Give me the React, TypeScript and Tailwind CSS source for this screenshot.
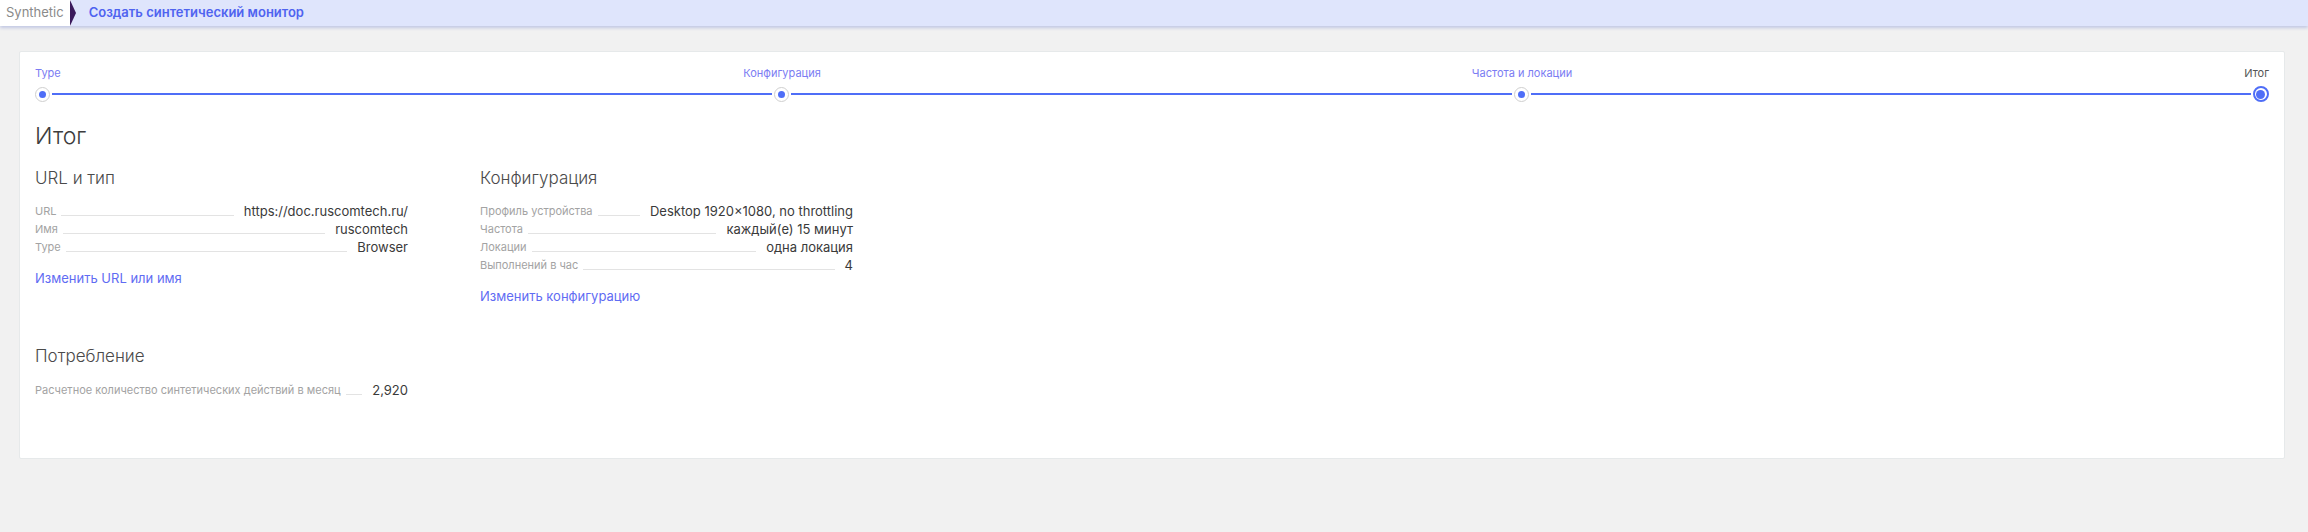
import React from 'react'

const font = { fontFamily: 'Inter, "Noto Sans", sans-serif' }

type Row = { label: string; value: string }

const urlRows: Row[] = [
  { label: 'URL', value: 'https://doc.ruscomtech.ru/' },
  { label: 'Имя', value: 'ruscomtech' },
  { label: 'Type', value: 'Browser' },
]

const configRows: Row[] = [
  { label: 'Профиль устройства', value: 'Desktop 1920×1080, no throttling' },
  { label: 'Частота', value: 'каждый(е) 15 минут' },
  { label: 'Локации', value: 'одна локация' },
  { label: 'Выполнений в час', value: '4' },
]

function SummaryRow({ label, value }: Row) {
  return (
    <div className="flex items-end h-[18px]">
      <span className="text-[11px] leading-[18px] text-[#a3a3a3] whitespace-nowrap">{label}</span>
      <span className="flex-1 ml-[5px] mr-[10px] mb-[4px] border-b border-[#e3e3e3]" />
      <span className="text-[13px] leading-[18px] text-[#3a3a3a] whitespace-nowrap">{value}</span>
    </div>
  )
}

function StepDot({ active }: { active?: boolean }) {
  if (active) {
    return (
      <div className="w-[16px] h-[16px] rounded-full border-2 border-[#4f6ef7] bg-white flex items-center justify-center shrink-0">
        <div className="w-[9px] h-[9px] rounded-full bg-[#4f6ef7]" />
      </div>
    )
  }
  return (
    <div className="w-[15px] h-[15px] rounded-full border border-[#cfcfcf] bg-white flex items-center justify-center shrink-0">
      <div className="w-[7px] h-[7px] rounded-full bg-[#4f6ef7]" />
    </div>
  )
}

function Stepper() {
  return (
    <div>
      <div className="grid grid-cols-6 px-[7px] text-[11px] leading-[16px]">
        <span className="-ml-[7px] text-[#7b7cf3]">Type</span>
        <span className="col-span-2 text-center text-[#7b7cf3]">Конфигурация</span>
        <span className="col-span-2 text-center text-[#7b7cf3]">Частота и локации</span>
        <span className="-mr-[7px] text-right text-[#555]">Итог</span>
      </div>
      <div className="flex items-center mt-[5px]">
        <StepDot />
        <div className="flex-1 mx-[2px] h-[1.5px] bg-[#4f6ef7]" />
        <StepDot />
        <div className="flex-1 mx-[2px] h-[1.5px] bg-[#4f6ef7]" />
        <StepDot />
        <div className="flex-1 mx-[2px] h-[1.5px] bg-[#4f6ef7]" />
        <StepDot active />
      </div>
    </div>
  )
}

export default function App() {
  return (
    <div className="min-h-[532px] bg-[#f1f1f1]" style={font}>
      <header className="h-[26px] flex items-stretch bg-[#dfe5fc] shadow-[0_2px_3px_rgba(90,110,200,0.3)] relative">
        <div className="bg-white flex items-center pl-[6px] pr-[7px] text-[13px] text-[#8a8a8a]">Synthetic</div>
        <svg width="7" height="26" viewBox="0 0 7 26" className="shrink-0 -ml-[1px]">
          <polygon points="0,0 6,13 0,26" fill="#3b1a5c" />
        </svg>
        <div className="flex items-center pl-[12px] text-[13px] font-semibold text-[#4f63f0]">
          Создать синтетический монитор
        </div>
      </header>

      <main className="pt-[25px] pl-[19px] pr-[23px] pb-[40px]">
        <div className="bg-white rounded-[2px] border border-[#e6e9ea] pt-[13px] px-[15px] pb-[59px]">
          <Stepper />

          <h1 className="mt-[20px] text-[23px] leading-[28px] font-light text-[#3d3d3d]">Итог</h1>

          <div className="mt-[16px] grid grid-cols-[373px_373px] gap-x-[72px]">
            <section>
              <h2 className="text-[17px] leading-[24px] font-light text-[#4a4a4a]">URL и тип</h2>
              <div className="mt-[12px]">
                {urlRows.map((r) => (
                  <SummaryRow key={r.label} {...r} />
                ))}
              </div>
              <a className="block mt-[13px] text-[13px] leading-[18px] text-[#5f6cf3] cursor-pointer">Изменить URL или имя</a>
            </section>
            <section>
              <h2 className="text-[17px] leading-[24px] font-light text-[#4a4a4a]">Конфигурация</h2>
              <div className="mt-[12px]">
                {configRows.map((r) => (
                  <SummaryRow key={r.label} {...r} />
                ))}
              </div>
              <a className="block mt-[13px] text-[13px] leading-[18px] text-[#5f6cf3] cursor-pointer">Изменить конфигурацию</a>
            </section>
          </div>

          <section className="mt-[39px] w-[373px]">
            <h2 className="text-[17px] leading-[24px] font-light text-[#4a4a4a]">Потребление</h2>
            <div className="mt-[13px]">
              <SummaryRow label="Расчетное количество синтетических действий в месяц" value="2,920" />
            </div>
          </section>
        </div>
      </main>
    </div>
  )
}
